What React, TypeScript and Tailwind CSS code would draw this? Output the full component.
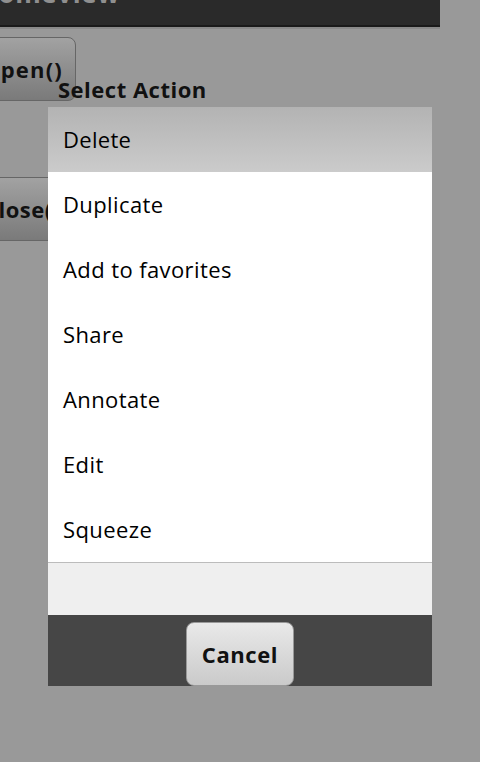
import React from "react";

const items = ["Duplicate", "Add to favorites", "Share", "Annotate", "Edit", "Squeeze"];

export default function App() {
  return (
    <div
      className="relative w-[480px] h-[762px] overflow-hidden bg-[#999999]"
      style={{ fontFamily: '"Open Sans", "DejaVu Sans", sans-serif' }}
    >
      {/* background activity */}
      <div className="w-[440px] h-[27px] bg-[#2a2a2a] border-b-2 border-[#1a1a1a] overflow-hidden">
        <div className="-mt-[22px] -ml-[22px] text-[26px] font-bold leading-[30px] tracking-[0.6px] text-[#8f8f8f]">Homeview</div>
      </div>
      <div className="h-[2px] w-[440px] bg-[#8a8a8a]" />
      <div className="flex flex-col gap-[76px] mt-[8px] -ml-[40px]">
        <div className="w-[116px] h-[64px] rounded-[8px] border border-[#666] bg-gradient-to-b from-[#a2a2a2] to-[#7a7a7a] flex items-center justify-end pr-[12px] text-[22px] font-bold tracking-[1.2px] text-[#111]">
          Open()
        </div>
        <div className="w-[140px] h-[64px] rounded-[8px] border border-[#666] bg-gradient-to-b from-[#a2a2a2] to-[#7a7a7a] flex items-center pl-[23px] text-[22px] font-bold tracking-[0.5px] text-[#111]">
          Close()
        </div>
      </div>

      {/* dialog */}
      <div className="absolute left-[48px] top-[75px] w-[384px]">
        <div className="pl-[10px] h-[32px] text-[22px] font-bold leading-[28px] text-[#111] tracking-[0.5px]">Select Action</div>
        <div className="h-[65px] bg-gradient-to-b from-[#b3b3b3] to-[#cbcbcb] flex items-center pl-[15px] text-[22px] tracking-[0.3px] text-black">
          Delete
        </div>
        <div className="bg-white">
          {items.map((t) => (
            <div key={t} className="h-[65px] flex items-center pl-[15px] text-[22px] tracking-[0.4px] text-black">
              {t}
            </div>
          ))}
        </div>
        <div className="h-px bg-[#bcbcbc]" />
        <div className="h-[52px] bg-[#efefef]" />
        <div className="h-[71px] bg-[#464646] flex justify-center pt-[7px]">
          <div className="w-[108px] h-[64px] rounded-[8px] border border-[#999] bg-gradient-to-b from-[#e9e9e9] to-[#cacaca] flex items-center justify-center text-[22px] font-bold tracking-[0.6px] text-[#111]">
            Cancel
          </div>
        </div>
      </div>
    </div>
  );
}
